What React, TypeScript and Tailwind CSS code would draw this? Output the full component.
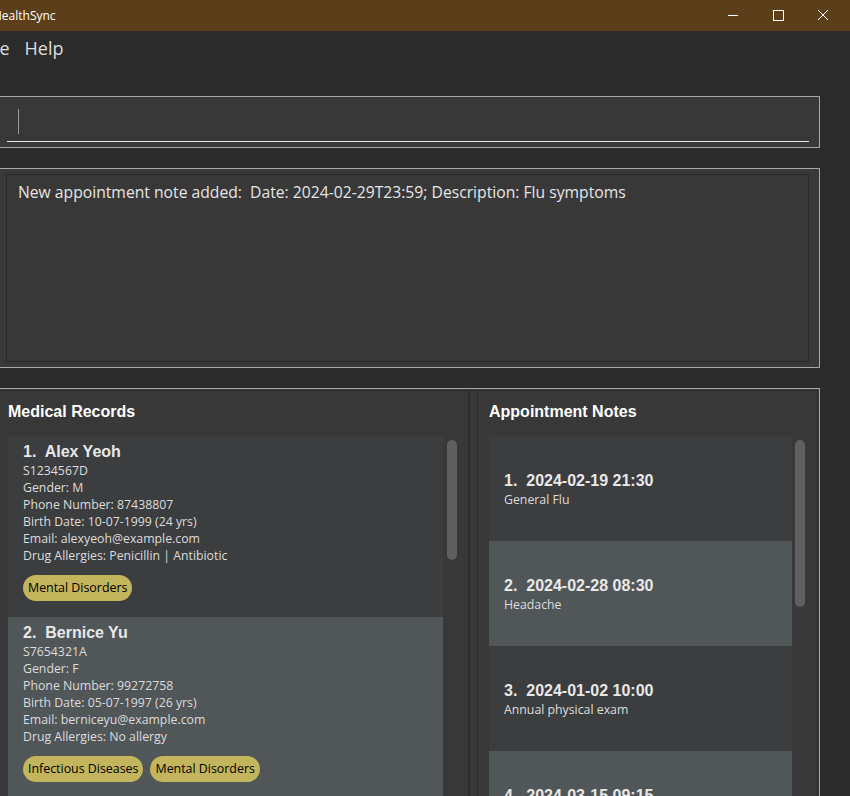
const records = [
  {
    name: 'Alex Yeoh',
    nric: 'S1234567D',
    gender: 'M',
    phone: '87438807',
    birth: '10-07-1999 (24 yrs)',
    email: 'alexyeoh@example.com',
    allergies: 'Penicillin | Antibiotic',
    tags: ['Mental Disorders'],
  },
  {
    name: 'Bernice Yu',
    nric: 'S7654321A',
    gender: 'F',
    phone: '99272758',
    birth: '05-07-1997 (26 yrs)',
    email: 'berniceyu@example.com',
    allergies: 'No allergy',
    tags: ['Infectious Diseases', 'Mental Disorders'],
  },
];

const notes = [
  { date: '2024-02-19 21:30', desc: 'General Flu' },
  { date: '2024-02-28 08:30', desc: 'Headache' },
  { date: '2024-01-02 10:00', desc: 'Annual physical exam' },
  { date: '2024-03-15 09:15', desc: 'Blood test review' },
];

function TitleBar() {
  return (
    <div className="flex h-[31px] shrink-0 items-center bg-[#5c3e1b] text-white">
      <span className="ml-[-7px] text-[12px] font-['Open_Sans',sans-serif]">HealthSync</span>
      <div className="ml-auto flex items-center">
        <svg width="46" height="31" viewBox="0 0 46 31">
          <line x1="14" y1="15.5" x2="24" y2="15.5" stroke="#fff" strokeWidth="1" />
        </svg>
        <svg width="44" height="31" viewBox="0 0 44 31">
          <rect x="13.5" y="10.5" width="10" height="10" fill="none" stroke="#fff" strokeWidth="1" />
        </svg>
        <svg width="46" height="31" viewBox="0 0 46 31">
          <path d="M14 10 L24 20 M24 10 L14 20" stroke="#fff" strokeWidth="1" />
        </svg>
      </div>
    </div>
  );
}

function MenuBar() {
  return (
    <div className="flex h-[34px] shrink-0 items-center gap-[15px] text-[18px] text-[#dedede] font-['Open_Sans',sans-serif]">
      <span className="ml-[-19px]">File</span>
      <span>Help</span>
    </div>
  );
}

function CommandBox() {
  return (
    <div className="-ml-[10px] h-[52px] w-[830px] shrink-0 border border-[#a8a8a8] bg-[#383838] pl-[16px] pr-[10px] pb-[5px]">
      <div className="flex h-full items-start border-b border-[#e8e8e8] pl-[11px] pt-[12px]">
        <div className="h-[25px] w-px bg-[#9a9a9a]" />
      </div>
    </div>
  );
}

function ResultDisplay() {
  return (
    <div className="-ml-[10px] h-[200px] w-[830px] shrink-0 border border-[#a8a8a8] bg-[#383838] pl-[15px] pr-[10px] py-[5px]">
      <div className="h-full border border-[#2a2a2a] pl-[11px] pt-[6px]">
        <p className="whitespace-pre text-[15.7px] leading-[22px] text-[#e6e6e6] font-['Open_Sans',sans-serif]">
          {'New appointment note added:  Date: 2024-02-29T23:59; Description: Flu symptoms'}
        </p>
      </div>
    </div>
  );
}

function Tag({ label }: { label: string }) {
  return (
    <span className="flex h-[26px] items-center rounded-full bg-[#c3b55b] px-[5px] text-[12.4px] text-black font-['Open_Sans',sans-serif]">
      {label}
    </span>
  );
}

function Scrollbar({ height, offset }: { height: number; offset: string }) {
  return (
    <div className={`w-[18px] shrink-0 pt-[4px] ${offset}`}>
      <div className="w-[10px] rounded-[5px] bg-[#5f5f5f]" style={{ height }} />
    </div>
  );
}

function RecordCard({ r, index }: { r: (typeof records)[number]; index: number }) {
  const bg = index % 2 === 0 ? 'bg-[#3c3d3f]' : 'bg-[#515659]';
  const detail = "text-[12.3px] leading-[17px] text-[#dcdcdc] font-['Open_Sans',sans-serif]";
  return (
    <div className={`${bg} pl-[15px] pt-[6px] pb-[16px]`}>
      <div className="whitespace-pre text-[16px] font-bold leading-[20px] text-[#e8e8e8] font-['Liberation_Sans',Arial,sans-serif]">
        {`${index + 1}.  ${r.name}`}
      </div>
      <div className={detail}>{r.nric}</div>
      <div className={detail}>Gender: {r.gender}</div>
      <div className={detail}>Phone Number: {r.phone}</div>
      <div className={detail}>Birth Date: {r.birth}</div>
      <div className={detail}>Email: {r.email}</div>
      <div className={detail}>Drug Allergies: {r.allergies}</div>
      <div className="mt-[11px] flex gap-[7px]">
        {r.tags.map((t) => (
          <Tag key={t} label={t} />
        ))}
      </div>
    </div>
  );
}

function NoteCard({ n, index }: { n: (typeof notes)[number]; index: number }) {
  const bg = index % 2 === 0 ? 'bg-[#3c3d3f]' : 'bg-[#515659]';
  return (
    <div className={`${bg} flex h-[105px] flex-col justify-center pl-[15px] pt-[2px]`}>
      <div className="whitespace-pre text-[16px] font-bold leading-[20px] text-[#e8e8e8] font-['Liberation_Sans',Arial,sans-serif]">
        {`${index + 1}.  ${n.date}`}
      </div>
      <div className="text-[12.3px] leading-[17px] text-[#dcdcdc] font-['Open_Sans',sans-serif]">{n.desc}</div>
    </div>
  );
}

function Heading({ children }: { children: string }) {
  return (
    <h2 className="pt-[11px] pb-[14px] text-[16px] font-bold leading-[20px] text-white font-['Liberation_Sans',Arial,sans-serif]">
      {children}
    </h2>
  );
}

function Lists() {
  return (
    <div className="-ml-[10px] h-[500px] w-[830px] shrink-0 border border-[#a8a8a8] bg-[#383838] p-px">
      <div className="flex h-full border border-[#2c2c2c]">
        <div className="w-[477px] shrink-0 border-r-2 border-[#2c2c2c] pl-[15px]">
          <Heading>Medical Records</Heading>
          <div className="flex">
            <div className="w-[435px] shrink-0">
              {records.map((r, i) => (
                <RecordCard key={r.nric} r={r} index={i} />
              ))}
            </div>
            <Scrollbar height={120} offset="pl-[4px]" />
          </div>
        </div>
        <div className="ml-[7px] flex-1 border-l border-[#2c2c2c] pl-[11px]">
          <Heading>Appointment Notes</Heading>
          <div className="flex">
            <div className="w-[303px] shrink-0">
              {notes.map((n, i) => (
                <NoteCard key={n.date} n={n} index={i} />
              ))}
            </div>
            <Scrollbar height={167} offset="pl-[3px]" />
          </div>
        </div>
      </div>
    </div>
  );
}

export default function App() {
  return (
    <div className="flex h-[796px] w-[850px] flex-col overflow-hidden bg-[#2b2b2b]">
      <TitleBar />
      <MenuBar />
      <div className="mt-[31px] flex flex-col gap-[20px]">
        <CommandBox />
        <ResultDisplay />
        <Lists />
      </div>
    </div>
  );
}
